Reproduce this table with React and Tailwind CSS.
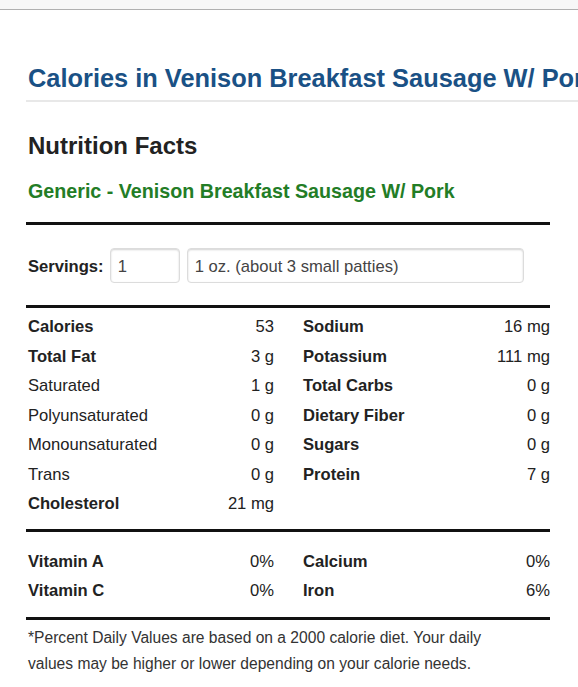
import React from 'react';

const left = [
  { label: 'Calories', value: '53', bold: true },
  { label: 'Total Fat', value: '3 g', bold: true },
  { label: 'Saturated', value: '1 g' },
  { label: 'Polyunsaturated', value: '0 g' },
  { label: 'Monounsaturated', value: '0 g' },
  { label: 'Trans', value: '0 g' },
  { label: 'Cholesterol', value: '21 mg', bold: true },
];

const right = [
  { label: 'Sodium', value: '16 mg', bold: true },
  { label: 'Potassium', value: '111 mg', bold: true },
  { label: 'Total Carbs', value: '0 g', bold: true },
  { label: 'Dietary Fiber', value: '0 g', bold: true },
  { label: 'Sugars', value: '0 g', bold: true },
  { label: 'Protein', value: '7 g', bold: true },
];

const vitLeft = [
  { label: 'Vitamin A', value: '0%', bold: true },
  { label: 'Vitamin C', value: '0%', bold: true },
];

const vitRight = [
  { label: 'Calcium', value: '0%', bold: true },
  { label: 'Iron', value: '6%', bold: true },
];

function Row({ label, value, bold }) {
  return (
    <div className="flex justify-between items-center h-[29.5px] pt-[4px]">
      <span className={bold ? 'font-bold' : ''}>{label}</span>
      <span>{value}</span>
    </div>
  );
}

function Column({ rows, className = '' }) {
  return (
    <div className={`flex flex-col ${className}`}>
      {rows.map((r) => (
        <Row key={r.label} {...r} />
      ))}
    </div>
  );
}

export default function App() {
  return (
    <div className="w-full min-h-[687px] bg-white overflow-hidden font-['Liberation_Sans',Arial,sans-serif] text-[#222]">
      {/* browser strip */}
      <div className="h-[10px] bg-[#f7f7f7] border-b border-[#b0b0b0]" />

      {/* page title */}
      <div className="ml-[26px] mt-[53px] w-[800px] border-b-2 border-[#e8e8e8] pb-[7px] pl-[2px]">
        <h1 className="text-[25.4px] leading-[30px] font-bold text-[#1a5185] whitespace-nowrap">
          Calories in Venison Breakfast Sausage W/ Pork
        </h1>
      </div>

      <div className="ml-[26px] w-[524px]">
        <h2 className="mt-[30px] pl-[2px] text-[24px] leading-[28px] font-bold">Nutrition Facts</h2>
        <h3 className="mt-[19px] pl-[2px] text-[19.7px] leading-[24px] font-bold text-[#237d26]">
          Generic - Venison Breakfast Sausage W/ Pork
        </h3>

        <div className="mt-[19px] h-[3px] bg-[#111]" />

        {/* servings */}
        <div className="mt-[23px] flex items-center h-[35px] pl-[2px] text-[16.6px]">
          <span className="font-bold pt-[4px]">Servings:</span>
          <div className="ml-[6px] w-[70px] h-[35px] flex items-center pl-[7px] pt-[4px] border border-[#dcdcdc] rounded-[4px] shadow-[inset_0_1px_2px_rgba(0,0,0,0.18)] text-[#444]">
            1
          </div>
          <div className="ml-[7px] w-[337px] h-[35px] flex items-center pl-[7px] pt-[4px] border border-[#dcdcdc] rounded-[4px] shadow-[inset_0_1px_2px_rgba(0,0,0,0.18)] text-[#444]">
            1 oz. (about 3 small patties)
          </div>
        </div>

        <div className="mt-[22px] h-[3px] bg-[#111]" />

        {/* nutrients */}
        <div className="mt-[3px] grid grid-cols-2 gap-x-7 text-[16.6px]">
          <Column rows={left} className="pl-[2px]" />
          <Column rows={right} className="pl-[1px]" />
        </div>

        <div className="mt-[11px] h-[3px] bg-[#111]" />

        {/* vitamins */}
        <div className="mt-[14px] grid grid-cols-2 gap-x-7 text-[16.6px]">
          <Column rows={vitLeft} className="pl-[2px]" />
          <Column rows={vitRight} className="pl-[1px]" />
        </div>

        <div className="mt-[12px] h-[3px] bg-[#111]" />

        <p className="mt-[5px] pl-[2px] max-w-[484px] text-[15.6px] leading-[26px] text-[#333]">
          *Percent Daily Values are based on a 2000 calorie diet. Your daily values may be higher or lower depending on your calorie needs.
        </p>
      </div>
    </div>
  );
}
